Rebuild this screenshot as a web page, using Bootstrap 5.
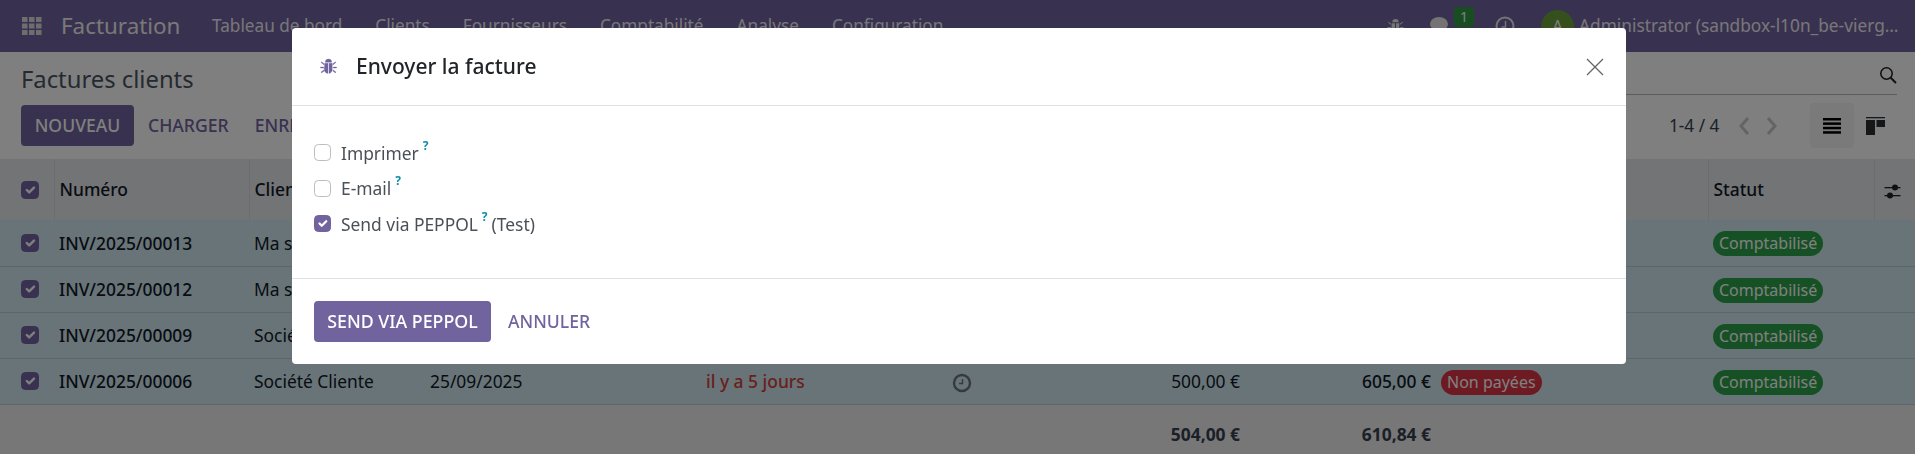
<!DOCTYPE html>
<html>
<head>
    <title>Factures clients - Facturation</title>
    <link href="https://cdn.jsdelivr.net/npm/bootstrap@5.3.0/dist/css/bootstrap.min.css" rel="stylesheet">
    <style>
        html, body { height: 100%; overflow: hidden; }
        body { font-family: "Noto Sans", "Liberation Sans", sans-serif; font-size: 17.4px; color: #374151; background: #fff; }

        /* top bar */
        .topbar { height: 52px; background: #71639e; color: #fff; padding: 0 16px 0 22px; }
        .apps-icon { width: 20px; height: 18px; fill: #ddd; }
        .brand-name { font-size: 22.4px; margin-left: 19px; width: 151px; color: #f2f2f2; }
        .top-menu { gap: 33px; color: #f0edf5; font-size: 17.2px; }
        .top-user { width: 320px; white-space: nowrap; overflow: hidden; text-overflow: ellipsis; font-size: 17.3px; margin-left: 5px; color: #f0edf5; }
        .avatar-a { width: 33px; height: 33px; border-radius: 50%; background: #6aa13a; margin-left: 26px; font-size: 16px; }
        .count-pill { position: absolute; top: 7px; left: 24px; width: 20px; height: 20px; background: #2f9a43; border-radius: 3px; font-size: 14px; text-align: center; line-height: 20px; }

        /* control panel */
        .ctrl-panel { height: 107px; padding: 0 18px 0 21px; background: #fff; }
        .title-line { height: 43px; }
        .page-title { font-size: 23.8px; line-height: 36px; color: #4b5563; padding-top: 9px; }
        .search-zone { width: 610px; height: 43px; border-bottom: 1px solid #b9b9b9; padding-top: 3px; }
        .btn-new { background: #71639e; color: #fff; font-weight: 500; font-size: 17.6px; height: 41px; width: 113px; border-radius: 4px; border: 0; padding: 0; }
        .btn-plain { color: #71639e; font-weight: 500; font-size: 17.6px; background: none; border: 0; padding: 0; }
        .btn-load { margin-left: 14px; }
        .btn-save { margin-left: 26px; }
        .view-active { width: 44px; height: 45px; background: #f5f5f5; border-radius: 4px; margin-left: 32px; }
        .pager-text { font-size: 17.2px; width: 69px; }
        .pager-next { margin-left: 16px; }
        .view-kanban { margin-left: 12px; margin-right: 12px; }

        /* list */
        .list-tbl { table-layout: fixed; width: 1915px; margin: 0; color: #111827; --bs-table-bg: transparent; }
        .list-tbl th, .list-tbl td { padding: 0 6px 0 5px; vertical-align: middle; border-color: #dadfe2; white-space: nowrap; }
        .list-tbl thead tr { height: 61px; background: #e7e9ed; }
        .list-tbl thead th { font-weight: 500; border-right: 1px solid #d8dadd; border-bottom: 0; }
        .list-tbl tbody tr { height: 46px; background: #d1e9ef; }
        .list-tbl tbody td { border-bottom: 1px solid #b8ced5; }
        .list-tbl tfoot tr { height: 50px; background: #eeeeee; }
        .list-tbl tfoot td { border: 0; font-weight: 700; color: #374151; padding-top: 9px; }
        .cell-inv { font-weight: 500; }
        .cell-total { font-weight: 500; }
        .list-check { width: 18px; height: 18px; margin: 0 0 0 16px; display: block; }
        .form-check-input { border-radius: 4px; border-color: #bdbdbd; }
        .form-check-input:checked { background-color: #71639e; border-color: #71639e; }
        .late-text { color: #d23f3a; font-weight: 500; }
        .pill-state { display: inline-block; border-radius: 13px; height: 25px; line-height: 25px; padding: 0 6px; color: #fff; font-size: 16px; }
        .pill-green { background: #2ca24a; }
        .pill-red { background: #dc3545; margin-left: -1px; }
        .opt-icon { margin-right: 3px; }

        /* dialog */
        .send-dialog { max-width: 1334px; width: 1334px; margin: 28px 0 0 292px; }
        .send-dialog .modal-content { border: 0; border-radius: 4px; }
        .send-dialog .modal-header { height: 78px; padding: 0 16px 0 28px; border-bottom: 1px solid #dee2e6; }
        .dlg-title { font-size: 21px; font-weight: 500; color: #212529; margin-left: 19px; }
        .bug-mark { stroke: #71639e; stroke-width: .3; }
        .send-dialog .modal-body { height: 172px; padding: 29px 22px 0; }
        .send-option { height: 35.6px; color: #495057; font-size: 17.4px; }
        .send-option .form-check-input { width: 17px; height: 17px; margin: 0 10px 0 0; }
        .help-mark { color: #0d8ca8; font-size: 12px; font-weight: 700; position: relative; top: -7px; margin-left: 4px; margin-right: 4px; }
        .send-dialog .modal-footer { height: 86px; padding: 0 22px; justify-content: flex-start; border-top: 1px solid #dee2e6; gap: 17px; }
        .send-dialog .modal-footer > * { margin: 0; }
        .btn-send { background: #71639e; color: #fff; font-weight: 500; font-size: 17.8px; width: 177px; height: 41px; padding: 0; border-radius: 4px; border: 0; }
        .btn-cancel { color: #71639e; font-weight: 500; font-size: 17.6px; background: none; border: 0; padding: 0; }
        .close-x { width: 18px; height: 18px; stroke: #666; stroke-width: 1.3; margin-right: 6px; }
        .chat-wrap { margin-left: 26px; width: 44px; height: 52px; }
        .chat-bubble { top: 16px; left: 0; }
        .clock-top { margin-left: 21px; }
    </style>
</head>
<body>
    <nav class="topbar d-flex align-items-center">
        <svg class="apps-icon" viewBox="0 0 20 18"><rect x="0" y="0" width="5.500" height="5"/><rect x="7" y="0" width="5.500" height="5"/><rect x="14" y="0" width="5.500" height="5"/><rect x="0" y="6.500" width="5.500" height="5"/><rect x="7" y="6.500" width="5.500" height="5"/><rect x="14" y="6.500" width="5.500" height="5"/><rect x="0" y="13" width="5.500" height="5"/><rect x="7" y="13" width="5.500" height="5"/><rect x="14" y="13" width="5.500" height="5"/></svg>
        <span class="brand-name">Facturation</span>
        <div class="top-menu d-flex">
            <span>Tableau de bord</span><span>Clients</span><span>Fournisseurs</span><span>Comptabilité</span><span>Analyse</span><span>Configuration</span>
        </div>
        <div class="d-flex align-items-center ms-auto">
            <svg width="17" height="17" viewBox="0 0 16 16" fill="#e8e8e8"><path d="M8 1a3 3 0 0 1 3 3H5a3 3 0 0 1 3-3zM4.500 5h3v9.500c-2-.2-3.500-1.500-3.500-4zM8.500 5h3v5.500c0 2.500-1.500 3.800-3 4zM1.500 3.500l2.700 2.200-.6.700L1 4.200zM14.500 3.500l.5.700-2.600 2.200-.6-.7zM.5 8.500h3v1h-3zM12.500 8.500h3v1h-3zM3.600 11.300l.5.800L1.500 14l-.5-.8zM12.400 11.300l2.600 1.900-.5.800-2.600-1.900z"/></svg>
            <div class="position-relative chat-wrap">
                <svg class="position-absolute chat-bubble" width="24" height="20" viewBox="0 0 24 20" fill="#e8e8e8"><ellipse cx="9" cy="8" rx="9" ry="7"/><path d="M3 12l-1 6 6-4z"/></svg>
                <span class="count-pill">1</span>
            </div>
            <svg class="clock-top" width="20" height="20" viewBox="0 0 20 20" fill="none" stroke="#e8e8e8" stroke-width="2"><circle cx="10" cy="10" r="8.500"/><path d="M10.500 5v6H6.500" stroke-width="1.500"/></svg>
            <span class="avatar-a d-flex align-items-center justify-content-center">A</span>
            <span class="top-user">Administrator (sandbox-l10n_be-vierge-client)</span>
        </div>
    </nav>

    <section class="ctrl-panel">
        <div class="title-line d-flex justify-content-between">
            <div class="page-title">Factures clients</div>
            <div class="search-zone d-flex justify-content-end align-items-center">
                <svg width="18" height="18" viewBox="0 0 18 18" fill="none" stroke="#222" stroke-width="1.600"><circle cx="7.500" cy="7.500" r="5.700"/><path d="M11.700 11.700l5.300 5.300" stroke-width="2"/></svg>
            </div>
        </div>
        <div class="d-flex align-items-center mt-2">
            <button class="btn-new">NOUVEAU</button>
            <button class="btn-plain btn-load">CHARGER</button>
            <button class="btn-plain btn-save">ENREGISTRER</button>
            <span class="pager-text ms-auto">1-4 / 4</span>
            <svg width="12" height="20" viewBox="0 0 12 20" fill="none" stroke="#c8c8c8" stroke-width="3"><path d="M10 2L3 10l7 8"/></svg>
            <svg class="pager-next" width="12" height="20" viewBox="0 0 12 20" fill="none" stroke="#c8c8c8" stroke-width="3"><path d="M2 2l7 8-7 8"/></svg>
            <span class="view-active d-flex align-items-center justify-content-center">
                <svg width="18" height="16" viewBox="0 0 18 16" fill="#000"><rect width="18" height="2.500"/><rect y="4.400" width="18" height="2.500"/><rect y="8.800" width="18" height="2.500"/><rect y="13.200" width="18" height="2.500"/></svg>
            </span>
            <svg class="view-kanban" width="19" height="18" viewBox="0 0 19 18" fill="#2b2f33"><rect width="19" height="1.300"/><rect y="3" width="9" height="15"/><rect x="10.500" y="3" width="8.500" height="7"/></svg>
        </div>
    </section>

    <table class="table list-tbl">
        <colgroup>
            <col style="width:54px"><col style="width:195px"><col style="width:176px"><col style="width:276px"><col style="width:229px"><col style="width:64px"><col style="width:252px"><col style="width:191px"><col style="width:271px"><col style="width:166px"><col style="width:41px">
        </colgroup>
        <thead>
            <tr>
                <th><input class="form-check-input list-check" type="checkbox" checked></th>
                <th>Numéro</th><th>Client</th><th>Date</th><th>Échéance</th><th></th><th class="text-end">Montant</th><th class="text-end">Total</th><th>Paiement</th><th>Statut</th>
                <th class="text-center">
                    <svg class="opt-icon" width="17" height="16" viewBox="0 0 16 16" fill="#222"><rect y="3" width="16" height="1.300"/><circle cx="10.500" cy="3.500" r="3"/><rect y="11" width="16" height="1.300"/><circle cx="5.500" cy="11.500" r="3"/></svg>
                </th>
            </tr>
        </thead>
        <tbody>
            <tr>
                <td><input class="form-check-input list-check" type="checkbox" checked></td>
                <td class="cell-inv">INV/2025/00013</td><td>Ma société</td><td></td><td></td><td></td><td></td><td></td><td></td>
                <td><span class="pill-state pill-green">Comptabilisé</span></td><td></td>
            </tr>
            <tr>
                <td><input class="form-check-input list-check" type="checkbox" checked></td>
                <td class="cell-inv">INV/2025/00012</td><td>Ma société</td><td></td><td></td><td></td><td></td><td></td><td></td>
                <td><span class="pill-state pill-green">Comptabilisé</span></td><td></td>
            </tr>
            <tr>
                <td><input class="form-check-input list-check" type="checkbox" checked></td>
                <td class="cell-inv">INV/2025/00009</td><td>Société Cliente</td><td></td><td></td><td></td><td></td><td></td><td></td>
                <td><span class="pill-state pill-green">Comptabilisé</span></td><td></td>
            </tr>
            <tr>
                <td><input class="form-check-input list-check" type="checkbox" checked></td>
                <td class="cell-inv">INV/2025/00006</td><td>Société Cliente</td><td>25/09/2025</td><td class="late-text">il y a 5 jours</td>
                <td class="text-center"><svg width="20" height="20" viewBox="0 0 20 20" fill="none" stroke="#6b7280" stroke-width="2.400"><circle cx="10" cy="10" r="8"/><path d="M10.500 6v4.500H7" stroke-width="1.400"/></svg></td>
                <td class="text-end">500,00 €</td><td class="text-end cell-total">605,00 €</td>
                <td><span class="pill-state pill-red">Non payées</span></td>
                <td><span class="pill-state pill-green">Comptabilisé</span></td><td></td>
            </tr>
        </tbody>
        <tfoot>
            <tr>
                <td></td><td></td><td></td><td></td><td></td><td></td><td class="text-end">504,00 €</td><td class="text-end">610,84 €</td><td></td><td></td><td></td>
            </tr>
        </tfoot>
    </table>

    <div class="modal-backdrop show"></div>
    <div class="modal d-block">
        <div class="modal-dialog send-dialog">
            <div class="modal-content">
                <div class="modal-header">
                    <svg class="bug-mark" width="17" height="17" viewBox="0 0 16 16" fill="#71639e"><path d="M8 1a3 3 0 0 1 3 3H5a3 3 0 0 1 3-3zM4.500 5h3v9.500c-2-.2-3.500-1.500-3.500-4zM8.500 5h3v5.500c0 2.500-1.500 3.800-3 4zM1.500 3.500l2.700 2.200-.6.700L1 4.200zM14.500 3.500l.5.700-2.600 2.200-.6-.7zM.5 8.500h3v1h-3zM12.500 8.500h3v1h-3zM3.600 11.300l.5.800L1.500 14l-.5-.8zM12.400 11.300l2.600 1.900-.5.800-2.600-1.900z"/></svg>
                    <h5 class="dlg-title mb-0">Envoyer la facture</h5>
                    <svg class="close-x ms-auto" viewBox="0 0 18 18" fill="none"><path d="M1 1l16 16M17 1L1 17"/></svg>
                </div>
                <div class="modal-body">
                    <div class="send-option d-flex align-items-center"><input class="form-check-input" type="checkbox"><span>Imprimer</span><sup class="help-mark">?</sup></div>
                    <div class="send-option d-flex align-items-center"><input class="form-check-input" type="checkbox"><span>E-mail</span><sup class="help-mark">?</sup></div>
                    <div class="send-option d-flex align-items-center"><input class="form-check-input" type="checkbox" checked><span>Send via PEPPOL</span><sup class="help-mark">?</sup><span>(Test)</span></div>
                </div>
                <div class="modal-footer">
                    <button class="btn-send">SEND VIA PEPPOL</button>
                    <button class="btn-cancel">ANNULER</button>
                </div>
            </div>
        </div>
    </div>

    <script src="https://cdn.jsdelivr.net/npm/bootstrap@5.3.0/dist/js/bootstrap.bundle.min.js"></script>
</body>
</html>
